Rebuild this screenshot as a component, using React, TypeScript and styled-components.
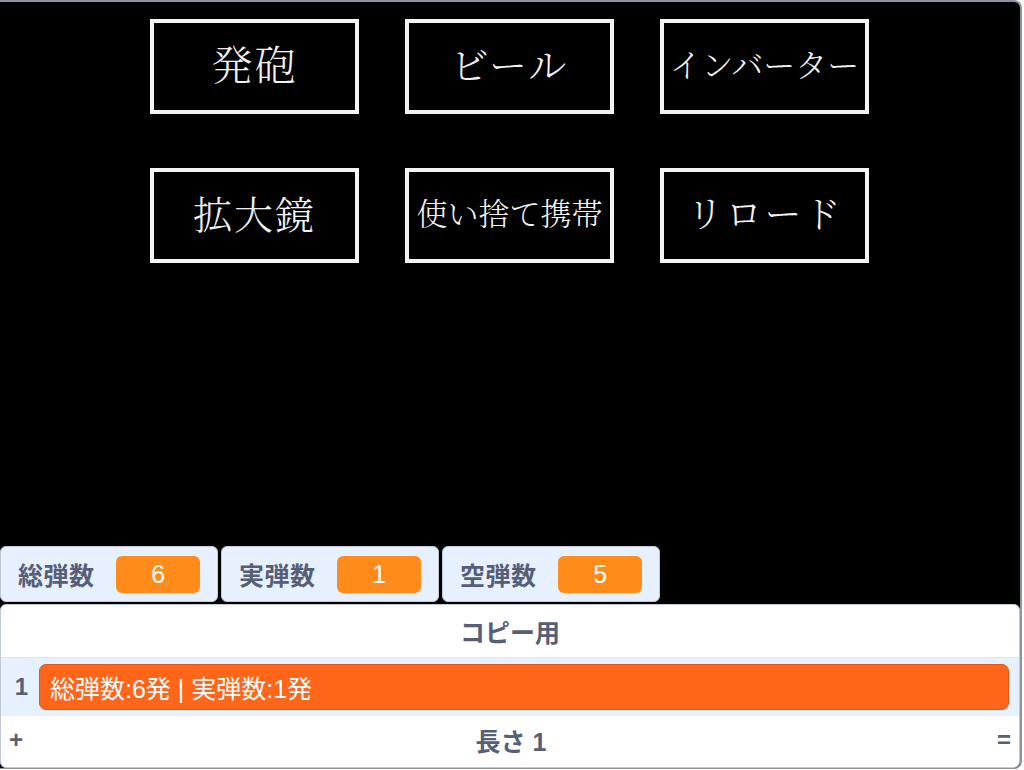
import React from 'react';
import styled, { createGlobalStyle } from 'styled-components';

const GlobalStyle = createGlobalStyle`
  html, body {
    margin: 0;
    padding: 0;
    background: #ffffff;
  }

  body {
    font-family: "Liberation Sans", "Noto Sans CJK JP", sans-serif;
  }
`;

const Stage = styled.div`
  width: 1022px;
  height: 769px;
  box-sizing: border-box;
  background: #000;
  border-top: 2px solid #8d93a1;
  border-right: 2px solid #8d93a1;
  border-bottom: 1px solid #8d93a1;
  border-radius: 0 8px 8px 0;
  display: flex;
  flex-direction: column;
  overflow: hidden;
`;

const ButtonGrid = styled.div`
  display: grid;
  grid-template-columns: repeat(3, 209px);
  column-gap: 46px;
  row-gap: 54px;
  padding: 17px 0 0 150px;
`;

const StageButton = styled.div<{ $size: number }>`
  height: 95px;
  box-sizing: border-box;
  border: 4px solid #f4f4f4;
  padding-bottom: 8px;
  display: flex;
  align-items: center;
  justify-content: center;
  color: #f2f2f2;
  font-family: "Noto Serif CJK JP", "Noto Sans CJK JP", serif;
  font-weight: 300;
  font-size: ${(p) => p.$size}px;
  letter-spacing: ${(p) => (p.$size > 36 ? 2 : 0)}px;
  white-space: nowrap;
`;

const Spacer = styled.div`
  flex: 1;
`;

const MonitorRow = styled.div`
  display: flex;
  gap: 3px;
  height: 56px;
  margin-bottom: 2px;
`;

const VarMonitor = styled.div`
  width: 218px;
  box-sizing: border-box;
  background: #e6f0ff;
  border: 1px solid #c2cad8;
  border-radius: 6px;
  display: flex;
  align-items: center;
  padding: 0 17px;
`;

const VarLabel = styled.span`
  width: 99px;
  color: #575e75;
  font-weight: bold;
  font-size: 25px;
  letter-spacing: 0.5px;
`;

const VarValue = styled.span`
  width: 84px;
  height: 37px;
  border-radius: 6px;
  background: #ff8c1a;
  color: #fff;
  font-size: 25px;
  display: flex;
  align-items: center;
  justify-content: center;
`;

const ListMonitor = styled.div`
  height: 164px;
  box-sizing: border-box;
  background: #fff;
  border: 1px solid #c2cad8;
  border-radius: 6px;
  display: flex;
  flex-direction: column;
  color: #575e75;
`;

const ListHeader = styled.div`
  height: 53px;
  box-sizing: border-box;
  border-bottom: 1px solid #dfe4ec;
  display: flex;
  align-items: center;
  justify-content: center;
  font-weight: bold;
  font-size: 25px;
`;

const ListBody = styled.div`
  height: 58px;
  background: #e6f0ff;
  display: flex;
  align-items: center;
  padding: 0 10px 0 12px;
  gap: 9px;
`;

const ItemIndex = styled.span`
  width: 17px;
  font-weight: bold;
  font-size: 24px;
  text-align: center;
`;

const ItemValue = styled.div`
  flex: 1;
  height: 46px;
  box-sizing: border-box;
  background: #ff661a;
  border: 1px solid #e0561c;
  border-radius: 7px;
  color: #fff;
  font-size: 25px;
  display: flex;
  align-items: center;
  padding-left: 10px;
`;

const ListFooter = styled.div`
  flex: 1;
  display: flex;
  align-items: center;
  justify-content: space-between;
  padding: 0 6px 4px 8px;
  font-weight: bold;
  font-size: 25px;
`;

const FooterSide = styled.span`
  width: 16px;
  font-size: 24px;
`;

const buttons = [
  { label: '発砲', size: 41 },
  { label: 'ビール', size: 38 },
  { label: 'インバーター', size: 32 },
  { label: '拡大鏡', size: 39 },
  { label: '使い捨て携帯', size: 31 },
  { label: 'リロード', size: 37 },
];

const monitors = [
  { label: '総弾数', value: 6 },
  { label: '実弾数', value: 1 },
  { label: '空弾数', value: 5 },
];

export default function App(): JSX.Element {
  return (
    <>
      <GlobalStyle />
      <Stage>
        <ButtonGrid>
          {buttons.map((b) => (
            <StageButton key={b.label} $size={b.size}>{b.label}</StageButton>
          ))}
        </ButtonGrid>
        <Spacer />
        <MonitorRow>
          {monitors.map((m) => (
            <VarMonitor key={m.label}>
              <VarLabel>{m.label}</VarLabel>
              <VarValue>{m.value}</VarValue>
            </VarMonitor>
          ))}
        </MonitorRow>
        <ListMonitor>
          <ListHeader>コピー用</ListHeader>
          <ListBody>
            <ItemIndex>1</ItemIndex>
            <ItemValue>総弾数:6発 | 実弾数:1発</ItemValue>
          </ListBody>
          <ListFooter>
            <FooterSide>+</FooterSide>
            <span>長さ 1</span>
            <FooterSide>=</FooterSide>
          </ListFooter>
        </ListMonitor>
      </Stage>
    </>
  );
}
